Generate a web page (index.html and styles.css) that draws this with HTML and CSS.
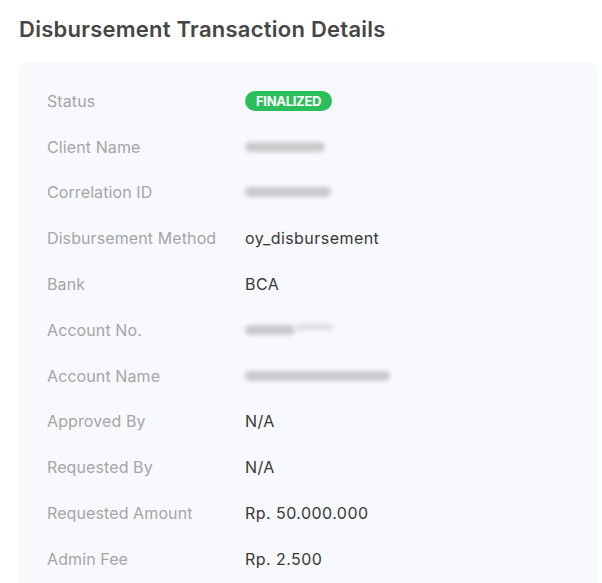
FILE: index.html
```html
<!DOCTYPE html>
<html lang="en">
<head>
  <meta charset="UTF-8" />
  <meta name="viewport" content="width=device-width, initial-scale=1.0"/>
  <title>Disbursement Transaction Details</title>
  <link rel="stylesheet" href="styles.css">
</head>
<body>

<div class="page">
  <h2 class="title">Disbursement Transaction Details</h2>

  <div class="card">
    <div class="row">
      <div class="label">Status</div>
      <div class="value"><span class="badge">FINALIZED</span></div>
    </div>
    <div class="row">
      <div class="label">Client Name</div>
      <div class="value"><span class="hidden" style="width: 80px;"></span></div>
    </div>
    <div class="row">
      <div class="label">Correlation ID</div>
      <div class="value"><span class="hidden" style="width: 86px;"></span></div>
    </div>
    <div class="row">
      <div class="label">Disbursement Method</div>
      <div class="value">oy_disbursement</div>
    </div>
    <div class="row">
      <div class="label">Bank</div>
      <div class="value">BCA</div>
    </div>
    <div class="row">
      <div class="label">Account No.</div>
      <div class="value"><span class="hidden" style="width: 50px;"></span><span class="hidden light" style="width: 38px;"></span></div>
    </div>
    <div class="row">
      <div class="label">Account Name</div>
      <div class="value"><span class="hidden" style="width: 145px;"></span></div>
    </div>
    <div class="row">
      <div class="label">Approved By</div>
      <div class="value">N/A</div>
    </div>
    <div class="row">
      <div class="label">Requested By</div>
      <div class="value">N/A</div>
    </div>
    <div class="row">
      <div class="label">Requested Amount</div>
      <div class="value">Rp. 50.000.000</div>
    </div>
    <div class="row">
      <div class="label">Admin Fee</div>
      <div class="value">Rp. 2.500</div>
    </div>
  </div>
</div>

</body>
</html>
```

FILE: styles.css
```css
body {
  font-family: Inter, 'Noto Sans', sans-serif;
  background: #fff;
  color: #333;
  margin: 0;
  padding: 0;
}
.page {
  padding: 14px 5px 0 19px;
}
.title {
  margin: 0 0 17px;
  font-size: 22px;
  font-weight: 600;
  color: #464646;
  letter-spacing: 0.25px;
  line-height: 31px;
}
.card {
  background: #f7f9fd;
  border-radius: 10px;
  padding: 16px 28px;
}
.row {
  display: flex;
  align-items: center;
  height: 45.8px;
  font-size: 16px;
}
.label {
  width: 198px;
  color: #a5a5a5;
  letter-spacing: 0.1px;
}
.value {
  display: flex;
  align-items: center;
  color: #383838;
  letter-spacing: 0.45px;
}
.badge {
  background: #2bbf5b;
  color: #fff;
  font-size: 13px;
  font-weight: 700;
  letter-spacing: -0.3px;
  padding: 3px 11px;
  border-radius: 10px;
  line-height: 14px;
}
.hidden {
  display: inline-block;
  height: 10px;
  border-radius: 5px;
  background: #c9c9cc;
  filter: blur(2px);
}
.hidden.light {
  height: 6px;
  margin-top: -6px;
  background: #dcdce0;
}
```
